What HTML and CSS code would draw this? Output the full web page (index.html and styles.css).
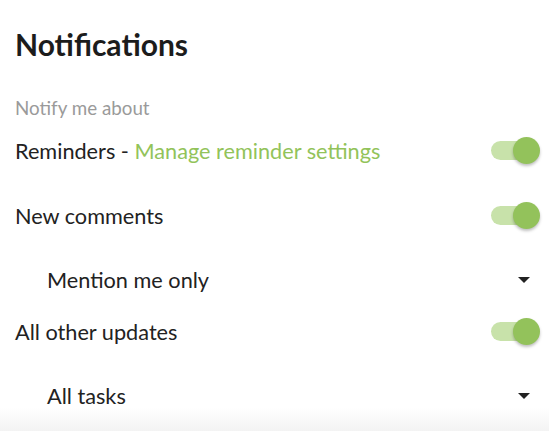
FILE: index.html
```html
<!DOCTYPE html>
<html>
<head>
<meta charset="utf-8">
<link rel="stylesheet" href="styles.css">
</head>
<body>
<div class="panel">
  <h1 class="title">Notifications</h1>
  <div class="subtitle">Notify me about</div>
  <div class="row">
    <span class="label">Reminders - <a class="link">Manage reminder settings</a></span>
    <span class="toggle"><span class="knob"></span></span>
  </div>
  <div class="row">
    <span class="label">New comments</span>
    <span class="toggle"><span class="knob"></span></span>
  </div>
  <div class="row sub">
    <span class="label">Mention me only</span>
    <span class="caret"></span>
  </div>
  <div class="row">
    <span class="label">All other updates</span>
    <span class="toggle"><span class="knob"></span></span>
  </div>
  <div class="row sub">
    <span class="label">All tasks</span>
    <span class="caret"></span>
  </div>
</div>
<div class="footer"></div>
</body>
</html>
```
FILE: styles.css
```css
html, body {
  margin: 0;
  padding: 0;
  background: #fff;
  font-family: Lato, "Open Sans", sans-serif;
  color: #222;
  overflow: hidden;
}
.panel {
  padding: 26px 13px 0 15px;
  height: 382px;
}
.title {
  margin: 0;
  font-size: 30px;
  font-weight: 700;
  line-height: 36px;
  color: #1c1c1c;
}
.subtitle {
  margin-top: 36px;
  font-size: 18.8px;
  line-height: 20px;
  color: #9a9a9a;
}
.row {
  display: flex;
  align-items: center;
  justify-content: space-between;
  height: 65px;
  font-size: 21.7px;
}
.subtitle + .row { margin-top: 0; }
.row.sub {
  padding-left: 32px;
  padding-right: 6px;
  height: 39px;
  margin-top: 12px;
}
.link {
  color: #92c35a;
}
.toggle {
  position: relative;
  width: 45px;
  height: 19px;
  border-radius: 10px;
  background: #c8e2aa;
}
.knob {
  position: absolute;
  right: -4px;
  top: -4px;
  width: 27px;
  height: 27px;
  border-radius: 50%;
  background: #93c25b;
  box-shadow: 0 2px 3px rgba(0,0,0,0.25);
}
.caret {
  width: 0;
  height: 0;
  border-left: 6px solid transparent;
  border-right: 6px solid transparent;
  border-top: 6px solid #222;
}
.footer {
  height: 23px;
  background: linear-gradient(#fff, #f3f3f3);
}
```
